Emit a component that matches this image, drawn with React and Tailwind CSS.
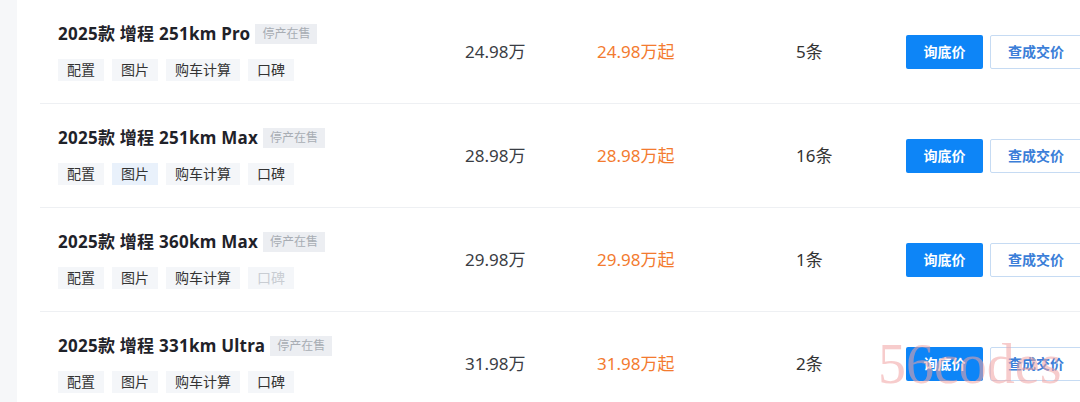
import React from 'react';

const rows = [
  { name: '2025款 增程 251km Pro', guide: '24.98万', deal: '24.98万起', count: '5条', kbOff: false },
  { name: '2025款 增程 251km Max', guide: '28.98万', deal: '28.98万起', count: '16条', kbOff: false, hover: true },
  { name: '2025款 增程 360km Max', guide: '29.98万', deal: '29.98万起', count: '1条', kbOff: true },
  { name: '2025款 增程 331km Ultra', guide: '31.98万', deal: '31.98万起', count: '2条', kbOff: false },
];

const font = { fontFamily: '"Noto Sans", "Noto Sans CJK SC", sans-serif' };

const App = () => {
  return (
    <div className="relative w-[1080px] h-[402px] overflow-hidden bg-[#f6f7f9] flex" style={font}>
      <div className="w-[17px] shrink-0" />
      <div className="flex-1 bg-white pl-[23px]">
        {rows.map((r) => (
          <div key={r.name} className="h-[104px] border-b border-[#eef0f3] flex items-center">
            {/* Name + tags */}
            <div className="w-[425px] pl-[18px] flex flex-col gap-[14px]">
              <div className="flex items-center h-[22px]">
                <span className="text-[17px] font-bold tracking-[0.25px] text-[#1f2229] leading-[22px]">{r.name}</span>
                <span className="ml-[5px] px-[7px] h-[20px] leading-[20px] text-[12px] bg-[#eceef2] text-[#a8adb4]">停产在售</span>
              </div>
              <div className="flex gap-[8px]">
                {['配置', '图片', '购车计算', '口碑'].map((t) => (
                  <span
                    key={t}
                    className={`px-[9px] h-[22px] leading-[22px] text-[14px] ${
                      t === '图片' && r.hover ? 'bg-[#e9f1fb]' : 'bg-[#f4f6f9]'
                    } ${t === '口碑' && r.kbOff ? 'text-[#c9cdd3]' : 'text-[#333]'}`}
                  >
                    {t}
                  </span>
                ))}
              </div>
            </div>
            <div className="w-[132px] text-[17px] text-[#3a3d44]">{r.guide}</div>
            <div className="w-[199px] text-[17px] text-[#f37b2f]">{r.deal}</div>
            <div className="w-[110px] text-[17px] text-[#333]">{r.count}</div>
            <div className="flex gap-[7px]">
              <button className="w-[77px] h-[34px] rounded-[2px] bg-[#0d85f7] text-white text-[14px] font-bold">询底价</button>
              <button className="w-[92px] h-[34px] rounded-[2px] border border-[#c6dbf3] bg-white text-[#3b7ed8] text-[14px] font-bold">查成交价</button>
            </div>
          </div>
        ))}
      </div>
      <div
        className="absolute left-[878px] top-[336px] text-[56px] leading-none text-[#f2a3a3] opacity-55 pointer-events-none"
        style={{ fontFamily: '"Liberation Serif", serif' }}
      >
        56codes
      </div>
    </div>
  );
};

export default App;
